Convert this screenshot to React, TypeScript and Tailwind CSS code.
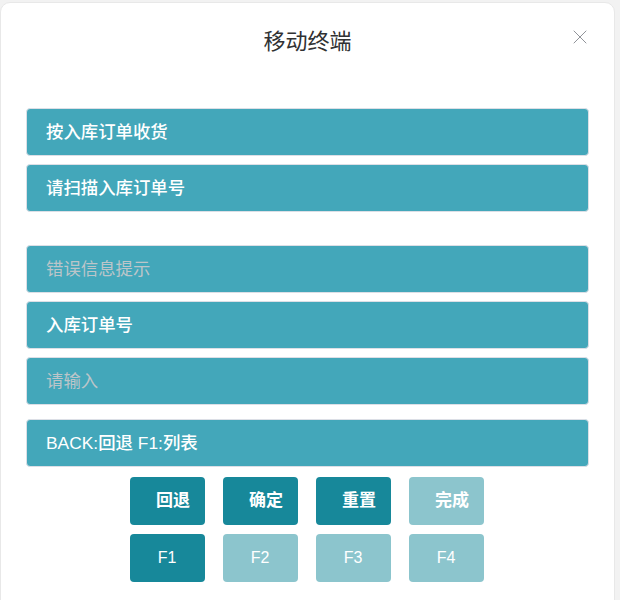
import { X } from 'lucide-react';

const font = { fontFamily: '"Liberation Sans", "Noto Sans CJK SC", sans-serif' };

function Row({ text, placeholder }: { text: string; placeholder?: boolean }) {
  return (
    <div
      className={`h-12 rounded-[4px] border border-[#dcdfe6] bg-[#43a7ba] px-[19px] flex items-center text-[17.4px] ${
        placeholder ? 'text-[#bcc5c9] font-normal' : 'text-white font-medium'
      }`}
    >
      {text}
    </div>
  );
}

function Key({ label, active, cn }: { label: string; active: boolean; cn?: boolean }) {
  return (
    <button
      className={`w-[75px] h-12 rounded-[4px] flex items-center justify-center text-white ${
        cn ? 'pl-3 font-bold text-[17px]' : 'font-medium text-base'
      } ${active ? 'bg-[#17889a]' : 'bg-[#8cc5cd]'}`}
    >
      {label}
    </button>
  );
}

export default function App() {
  return (
    <div className="min-h-[600px] bg-[#f2f2f2] pt-[2px] pr-[5px]" style={font}>
      <div className="bg-white rounded-[10px] border border-[#e8e8e8] h-[620px]">
        {/* Header */}
        <div className="relative h-[78px] flex items-center justify-center">
          <h2 className="text-[22px] text-[#303133] -mt-[1px]">移动终端</h2>
          <button className="absolute right-[22px] top-[22px] text-[#909399]">
            <X size={24} strokeWidth={1} />
          </button>
        </div>

        <div className="px-[25px] pt-[27px]">
          <div className="flex flex-col gap-2">
            <Row text="按入库订单收货" />
            <Row text="请扫描入库订单号" />
          </div>
          <div className="flex flex-col gap-2 mt-[33px]">
            <Row text="错误信息提示" placeholder />
            <Row text="入库订单号" />
            <Row text="请输入" placeholder />
          </div>
          <div className="mt-[14px]">
            <Row text="BACK:回退 F1:列表" />
          </div>
          <div className="flex flex-col items-center gap-[9px] mt-[10px] pr-[2px]">
            <div className="flex gap-[18px]">
              <Key label="回退" active cn />
              <Key label="确定" active cn />
              <Key label="重置" active cn />
              <Key label="完成" active={false} cn />
            </div>
            <div className="flex gap-[18px]">
              <Key label="F1" active />
              <Key label="F2" active={false} />
              <Key label="F3" active={false} />
              <Key label="F4" active={false} />
            </div>
          </div>
        </div>
      </div>
    </div>
  );
}
